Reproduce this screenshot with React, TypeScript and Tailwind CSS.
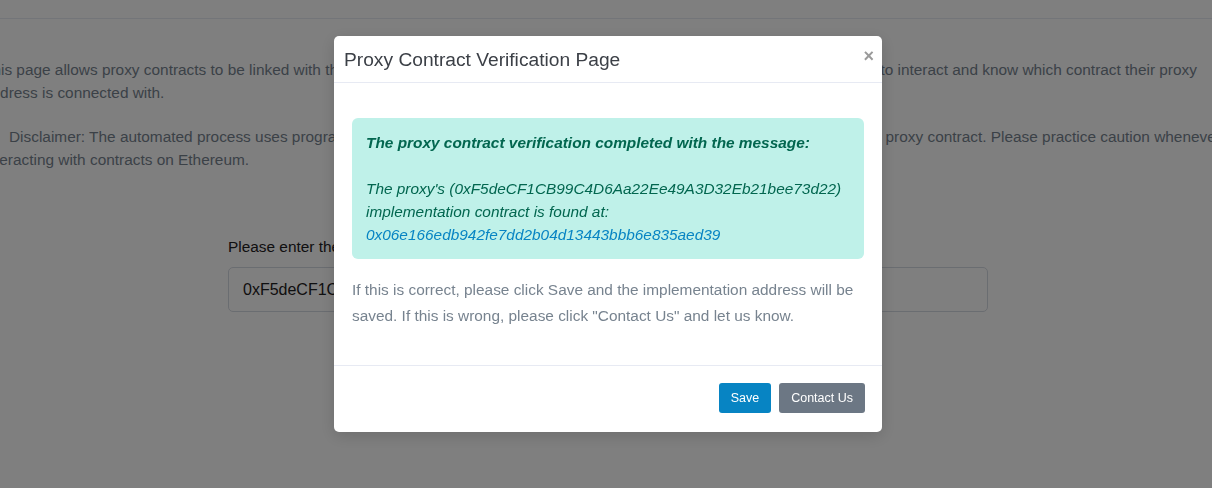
import React from "react";

function WarningIcon() {
  return (
    <svg
      viewBox="0 0 16 16"
      className="inline-block w-[14px] h-[14px] align-[-2px] mr-[12px]"
      fill="#f1b44c"
    >
      <path d="M8 1.2 15.4 14.6H.6L8 1.2Z" />
      <rect x="7.2" y="5.6" width="1.6" height="5" fill="#fff" />
      <rect x="7.2" y="11.6" width="1.6" height="1.6" fill="#fff" />
    </svg>
  );
}

function VerifyModal() {
  return (
    <div className="fixed inset-0 bg-black/50 flex justify-center pl-[4px]">
      <div className="mt-[36px] w-[548px] h-[396px] bg-white rounded-[5px] shadow-[0_4px_16px_rgba(0,0,0,0.15)] flex flex-col">
        <div className="h-[47px] flex items-center justify-between pl-[10px] pr-[8px] border-b border-[#e7eaf3]">
          <h5 className="text-[19.2px] text-[#3c4047] leading-none mt-[1px]">
            Proxy Contract Verification Page
          </h5>
          <button className="text-[#9a9a9a] text-[18px] font-bold leading-none -mt-[6px]">
            ×
          </button>
        </div>
        <div className="pt-[35px] px-[18px] pb-[18px] flex-1">
          <div className="bg-[#bff1e9] rounded-[6px] px-[14px] py-[13px] text-[15.4px] leading-[23px] italic text-[#02664f]">
            <b>The proxy contract verification completed with the message:</b>
            <br />
            <br />
            The proxy's (0xF5deCF1CB99C4D6Aa22Ee49A3D32Eb21bee73d22)
            <br />
            implementation contract is found at:
            <br />
            <a href="#" className="text-[#0784c3]">
              0x06e166edb942fe7dd2b04d13443bbb6e835aed39
            </a>
          </div>
          <p className="mt-[18px] text-[15.4px] leading-[26px] text-[#77838f]">
            If this is correct, please click Save and the implementation address
            will be saved. If this is wrong, please click "Contact Us" and let us
            know.
          </p>
        </div>
        <div className="border-t border-[#e7eaf3] flex justify-end gap-[8px] pt-[17px] pb-[19px] pr-[17px]">
          <button className="h-[30px] px-[12px] rounded-[3px] bg-[#0784c3] text-white text-[12.5px]">
            Save
          </button>
          <button className="h-[30px] px-[12px] rounded-[3px] bg-[#6c7784] text-white text-[12.5px]">
            Contact Us
          </button>
        </div>
      </div>
    </div>
  );
}

export default function App() {
  return (
    <div className="relative w-full h-[488px] overflow-hidden bg-white font-['Liberation_Sans',Arial,sans-serif]">
      <div className="h-[19px] border-b border-[#e7eaf3]" />
      <div className="ml-[-17px] w-[1260px] pt-[39px] text-[15.4px] leading-[23px] text-[#77838f]">
        <p className="whitespace-nowrap">
          This page allows proxy contracts to be linked with their implementation
          contracts, thus enabling any users of the explorer to be able to interact and know which contract their proxy
          <br />
          address is connected with.
        </p>
        <p className="mt-[21px] whitespace-nowrap">
          <WarningIcon />
          Disclaimer: The automated process uses programmatic methods to detect the
          implementation and this may not reflect the actual proxy contract. Please practice caution whenever
          <br />
          interacting with contracts on Ethereum.
        </p>
      </div>
      <div className="w-[760px] ml-[228px] mt-[64px]">
        <label className="block text-[15.4px] leading-[23px] text-[#1e2022] mb-[9px]">
          Please enter the contract address that you would like to verify
        </label>
        <input
          readOnly
          value="0xF5deCF1CB99C4D6Aa22Ee49A3D32Eb21bee73d22"
          className="w-full h-[45px] px-[14px] rounded-[5px] border border-[#d5dae2] text-[16px] text-[#1e2022] outline-none"
        />
      </div>
      <VerifyModal />
    </div>
  );
}
